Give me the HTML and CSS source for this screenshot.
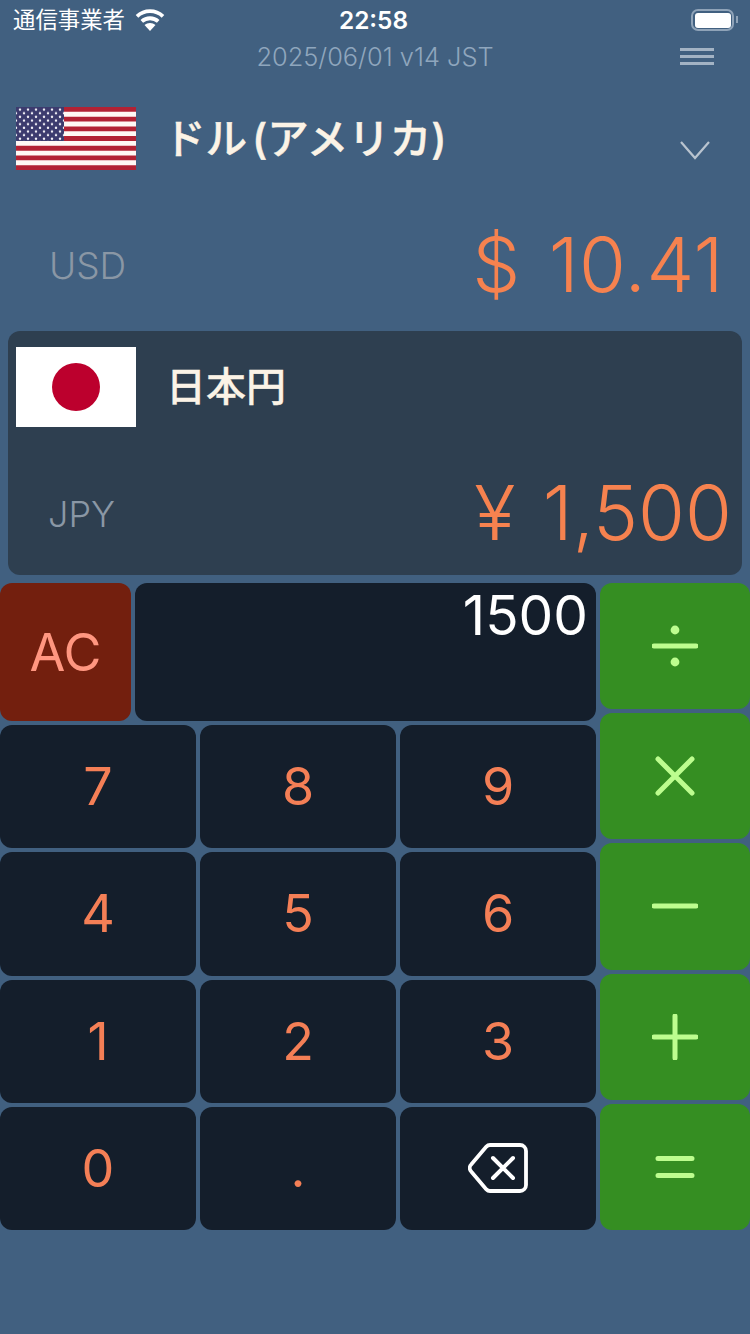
FILE: index.html
```html
<!DOCTYPE html>
<html lang="ja">

<head>
    <meta charset="UTF-8">
    <meta name="viewport" content="width=device-width, initial-scale=1.0">
    <title>通貨換算</title>
    <link rel="stylesheet" href="styles.css">
</head>

<body>
    <div class="status">
        <div class="status-left">
            <span class="carrier">通信事業者</span>
            <svg class="wifi" width="30" height="22" viewBox="0 0 30 22">
                <path d="M15 22l-5.500-6c3-2.800 8-2.800 11 0z" fill="#fff" />
                <path d="M6.800 12.300c4.600-4.100 11.800-4.100 16.400 0M2 7.300c7.400-6.800 18.600-6.800 26 0" fill="none" stroke="#fff" stroke-width="3.800" />
            </svg>
        </div>
        <span class="time">22:58</span>
        <div class="battery"><i></i></div>
    </div>

    <div class="subhead">
        <span class="date">2025/06/01 v14 JST</span>
        <div class="menu"><i></i><i></i><i></i></div>
    </div>

    <section class="from">
        <div class="cur-head">
            <svg class="flag-us" width="120" height="63" viewBox="0 0 120 63">
                <defs>
                    <pattern id="stars" width="8" height="7.300" patternUnits="userSpaceOnUse" x="0" y="0">
                        <circle cx="4" cy="2.600" r="1.200" fill="#f4f2f8" />
                        <circle cx="0" cy="6.250" r="1.200" fill="#f4f2f8" />
                        <circle cx="8" cy="6.250" r="1.200" fill="#f4f2f8" />
                    </pattern>
                </defs>
                <rect width="120" height="63" fill="#fff8f4" />
                <path d="M0 2.400h120M0 12.100h120M0 21.800h120M0 31.500h120M0 41.200h120M0 50.900h120M0 60.600h120" stroke="#b22234" stroke-width="4.850" />
                <rect width="48" height="34" fill="#3c3b6e" />
                <rect width="48" height="34" fill="url(#stars)" />
            </svg>
            <span class="cur-name">ドル (アメリカ)</span>
            <svg class="chevron" width="32" height="20" viewBox="0 0 32 20">
                <path d="M2 2l14 16L30 2" fill="none" stroke="#b9c4cf" stroke-width="2.200" />
            </svg>
        </div>
        <div class="cur-row">
            <span class="code">USD</span>
            <span class="amount">$ 10.41</span>
        </div>
    </section>

    <section class="to">
        <div class="cur-head">
            <div class="flag-jp"><i></i></div>
            <span class="cur-name">日本円</span>
        </div>
        <div class="cur-row">
            <span class="code">JPY</span>
            <span class="amount">¥ 1,500</span>
        </div>
    </section>

    <div class="pad">
        <div class="pad-left">
            <div class="pad-top">
                <button class="key key-ac" type="button">AC</button>
                <div class="display">1500</div>
            </div>
            <div class="nums">
                <button class="key" type="button">7</button>
                <button class="key" type="button">8</button>
                <button class="key" type="button">9</button>
                <button class="key" type="button">4</button>
                <button class="key" type="button">5</button>
                <button class="key" type="button">6</button>
                <button class="key" type="button">1</button>
                <button class="key" type="button">2</button>
                <button class="key" type="button">3</button>
                <button class="key" type="button">0</button>
                <button class="key" type="button">.</button>
                <button class="key" type="button" aria-label="delete">
                    <svg width="60" height="50" viewBox="0 0 60 50">
                        <path d="M22 2h30a6 6 0 0 1 6 6v34a6 6 0 0 1-6 6H22a5 5 0 0 1-3.600-1.600L3.200 28.500a5 5 0 0 1 0-7L18.400 3.600A5 5 0 0 1 22 2z" fill="none" stroke="#fff" stroke-width="3.800" />
                        <path d="M25 15l20 20M45 15L25 35" fill="none" stroke="#fff" stroke-width="4" stroke-linecap="round" />
                    </svg>
                </button>
            </div>
        </div>
        <div class="ops">
            <button class="key key-op" type="button" aria-label="divide">
                <svg width="46" height="42" viewBox="0 0 46 42">
                    <circle cx="23" cy="5" r="4.400" fill="#bdfd8f" />
                    <circle cx="23" cy="37" r="4.400" fill="#bdfd8f" />
                    <path d="M2 21h42" stroke="#bdfd8f" stroke-width="5" stroke-linecap="round" />
                </svg>
            </button>
            <button class="key key-op" type="button" aria-label="times">
                <svg width="40" height="40" viewBox="0 0 40 40">
                    <path d="M3 3l34 34M37 3L3 37" stroke="#bdfd8f" stroke-width="5" stroke-linecap="round" />
                </svg>
            </button>
            <button class="key key-op" type="button" aria-label="minus">
                <svg width="46" height="6" viewBox="0 0 46 6">
                    <path d="M2 3h42" stroke="#bdfd8f" stroke-width="5" stroke-linecap="round" />
                </svg>
            </button>
            <button class="key key-op" type="button" aria-label="plus">
                <svg width="46" height="46" viewBox="0 0 46 46">
                    <path d="M2 23h42M23 2v42" stroke="#bdfd8f" stroke-width="5" stroke-linecap="round" />
                </svg>
            </button>
            <button class="key key-op" type="button" aria-label="equals">
                <svg width="40" height="24" viewBox="0 0 40 24">
                    <path d="M3 3.500h34M3 20.500h34" stroke="#bdfd8f" stroke-width="5" stroke-linecap="round" />
                </svg>
            </button>
        </div>
    </div>
</body>

</html>
```
FILE: styles.css
```css
* {
    margin: 0;
    padding: 0;
    box-sizing: border-box;
}

body {
    width: 750px;
    height: 1334px;
    overflow: hidden;
    background: #416080;
    font-family: Inter, "Noto Sans CJK JP", sans-serif;
}

.status {
    display: grid;
    grid-template-columns: 1fr auto 1fr;
    align-items: center;
    height: 40px;
    padding: 0 16px 0 13px;
    color: #fff;
}

.status-left {
    display: flex;
    align-items: center;
    gap: 10px;
}

.carrier {
    font-size: 22.400px;
    line-height: 38px;
    margin-top: -1px;
}

.time {
    font-size: 24.400px;
    font-weight: 600;
}

.battery {
    position: relative;
    justify-self: end;
    width: 43px;
    height: 22px;
    padding: 1.500px;
    border: 2.500px solid #8fa3b8;
    border-radius: 7px;
}

/* nub on the right end */
.battery::after {
    content: "";
    position: absolute;
    top: 5px;
    right: -6px;
    width: 2px;
    height: 7px;
    background: #8fa3b8;
}

.battery i {
    display: block;
    height: 100%;
    background: #fff;
    border-radius: 3px;
}

.subhead {
    display: grid;
    grid-template-columns: 1fr auto 1fr;
    align-items: center;
    height: 32px;
}

.date {
    grid-column: 2;
    font-size: 25.400px;
    font-weight: 300;
    color: #8fa6bd;
}

.menu {
    justify-self: end;
    display: flex;
    flex-direction: column;
    gap: 4px;
    width: 34px;
    margin-right: 36px;
}

.menu i {
    height: 3px;
    background: #a3b3c4;
}

.from {
    height: 259px;
    padding-top: 35px;
}

.cur-head {
    display: flex;
    align-items: flex-start;
    padding-left: 16px;
}

.flag-us {
    flex: none;
}

.cur-name {
    margin-left: 28px;
    font-size: 41.500px;
    line-height: 65px;
    font-weight: 500;
    word-spacing: -6px;
    color: #fbf3e6;
    -webkit-text-stroke: 0.500px #fbf3e6;
}

.chevron {
    margin: 33px 39px 0 auto;
}

.cur-row {
    display: flex;
    align-items: center;
    justify-content: space-between;
    height: 100px;
}

.from .cur-row {
    margin-top: 43px;
    padding: 0 26px 0 49px;
}

.code {
    font-size: 37px;
    font-weight: 300;
    color: #8a97a5;
}

.amount {
    margin-bottom: 2px;
    font-size: 76px;
    font-weight: 300;
    word-spacing: 6px;
    color: #f6824f;
}

.from .amount {
    letter-spacing: 0.500px;
}

.to {
    height: 244px;
    margin: 0 8px;
    padding-top: 16px;
    background: #2e3f50;
    border-radius: 12px;
}

.to .cur-head {
    padding-left: 8px;
}

.flag-jp {
    display: flex;
    align-items: center;
    justify-content: center;
    width: 120px;
    height: 80px;
    background: #fff;
}

.flag-jp i {
    width: 48px;
    height: 48px;
    border-radius: 50%;
    background: #bc002d;
}

.to .cur-name {
    margin-left: 30px;
    font-size: 40px;
    line-height: 80px;
    -webkit-text-stroke: 0.300px #fbf3e6;
}

.to .cur-row {
    margin-top: 37px;
    padding: 0 10px 0 40px;
}

.to .code {
    font-size: 36px;
}

.to .amount {
    margin-bottom: 4px;
}

.pad {
    display: flex;
    gap: 4px;
    margin-top: 8px;
    height: 647px;
}

.pad-left {
    display: flex;
    flex-direction: column;
    gap: 4px;
    width: 596px;
}

.pad-top {
    display: flex;
    gap: 4px;
    height: 138px;
}

.nums {
    flex: 1;
    display: grid;
    grid-template-columns: repeat(3, 1fr);
    grid-template-rows: repeat(4, 1fr);
    gap: 4px;
}

.key {
    display: flex;
    align-items: center;
    justify-content: center;
    border: 0;
    border-radius: 12px;
    background: #141e2b;
    font-family: inherit;
    font-size: 52px;
    font-weight: 375;
    color: #f47f56;
}

.key-ac {
    width: 131px;
    background: #731f0e;
    color: #ff9680;
}

.display {
    flex: 1;
    padding: 0 8px;
    background: #141e2b;
    border-radius: 12px;
    text-align: right;
    font-size: 55px;
    line-height: 64px;
    color: #fff;
}

.ops {
    flex: 1;
    display: grid;
    grid-template-rows: repeat(5, 1fr);
    gap: 4px;
}

.key-op {
    background: #358e22;
}
```
